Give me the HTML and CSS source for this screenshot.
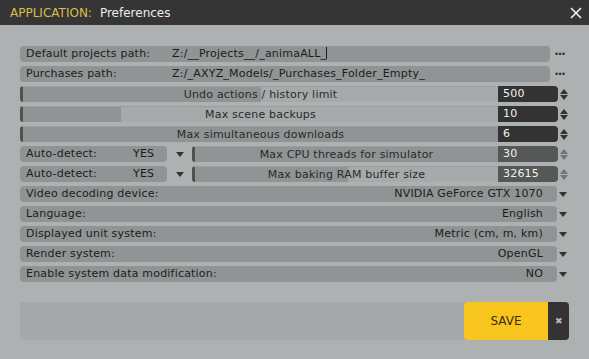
FILE: index.html
```html
<!DOCTYPE html>
<html lang="en">
<head>
    <meta charset="UTF-8">
    <title>Preferences</title>
    <link rel="stylesheet" href="styles.css">
</head>
<body>
    <div class="titlebar">
        <span class="app">APPLICATION:</span>
        <span class="title">Preferences</span>
        <svg class="close" width="12" height="12" viewBox="0 0 12 12">
            <path d="M1 1 L11 11 M11 1 L1 11" stroke="#f0f0f0" stroke-width="1.6" fill="none"/>
        </svg>
    </div>

    <div class="content">
        <div class="row">
            <div class="field path">
                <span class="label">Default projects path:</span>
                <span class="value">Z:/__Projects__/_animaALL_<span class="caret"></span></span>
            </div>
            <div class="side dots">&middot;&middot;&middot;</div>
        </div>
        <div class="row">
            <div class="field path">
                <span class="label">Purchases path:</span>
                <span class="value">Z:/_AXYZ_Models/_Purchases_Folder_Empty_</span>
            </div>
            <div class="side dots">&middot;&middot;&middot;</div>
        </div>

        <div class="row">
            <div class="slider">
                <div class="track"><div class="fill" style="width: 50%"></div><span>Undo actions / history limit</span></div>
                <div class="num">500</div>
            </div>
            <div class="side spin"><i class="up"></i><i class="down"></i></div>
        </div>
        <div class="row">
            <div class="slider">
                <div class="track"><div class="fill" style="width: 20.7%"></div><span>Max scene backups</span></div>
                <div class="num">10</div>
            </div>
            <div class="side spin"><i class="up"></i><i class="down"></i></div>
        </div>
        <div class="row">
            <div class="slider">
                <div class="track"><div class="fill" style="width: 100%"></div><span>Max simultaneous downloads</span></div>
                <div class="num">6</div>
            </div>
            <div class="side spin"><i class="up"></i><i class="down"></i></div>
        </div>

        <div class="row">
            <div class="field auto">
                <span class="label">Auto-detect:</span>
                <span class="yes">YES</span>
            </div>
            <div class="auto-arrow"><i class="down"></i></div>
            <div class="slider off">
                <div class="track"><div class="fill" style="width: 100%"></div><span>Max CPU threads for simulator</span></div>
                <div class="num">30</div>
            </div>
            <div class="side spin off"><i class="up"></i><i class="down"></i></div>
        </div>
        <div class="row">
            <div class="field auto">
                <span class="label">Auto-detect:</span>
                <span class="yes">YES</span>
            </div>
            <div class="auto-arrow"><i class="down"></i></div>
            <div class="slider off">
                <div class="track"><div class="fill" style="width: 50.6%"></div><span>Max baking RAM buffer size</span></div>
                <div class="num">32615</div>
            </div>
            <div class="side spin off"><i class="up"></i><i class="down"></i></div>
        </div>

        <div class="row">
            <div class="field select">
                <span class="label">Video decoding device:</span>
                <span class="choice">NVIDIA GeForce GTX 1070</span>
            </div>
            <div class="side drop"><i class="down"></i></div>
        </div>
        <div class="row">
            <div class="field select">
                <span class="label">Language:</span>
                <span class="choice">English</span>
            </div>
            <div class="side drop"><i class="down"></i></div>
        </div>
        <div class="row">
            <div class="field select">
                <span class="label">Displayed unit system:</span>
                <span class="choice">Metric (cm, m, km)</span>
            </div>
            <div class="side drop"><i class="down"></i></div>
        </div>
        <div class="row">
            <div class="field select">
                <span class="label">Render system:</span>
                <span class="choice">OpenGL</span>
            </div>
            <div class="side drop"><i class="down"></i></div>
        </div>
        <div class="row">
            <div class="field select">
                <span class="label">Enable system data modification:</span>
                <span class="choice">NO</span>
            </div>
            <div class="side drop"><i class="down"></i></div>
        </div>

        <div class="footer">
            <button class="save">SAVE</button>
            <button class="cancel">&#x2716;</button>
        </div>
    </div>
</body>
</html>
```

FILE: styles.css
```css
body {
    margin: 0;
    background-color: #adb1b1;
    font-family: "DejaVu Sans", Verdana, sans-serif;
    font-size: 11px;
    letter-spacing: 0.2px;
    color: #1c1c1c;
}

.titlebar {
    display: flex;
    align-items: center;
    height: 25px;
    padding: 0 7px 0 10px;
    background-color: #353535;
    font-size: 12px;
    letter-spacing: 0;
}

.titlebar .app {
    color: #d9bd48;
    margin-right: 8px;
}

.titlebar .title {
    color: #ececec;
    flex: 1;
}

.content {
    padding: 21px 20px 0 20px;
}

.row {
    display: flex;
    height: 16px;
    margin-bottom: 4px;
}

.field {
    flex: 1;
    display: flex;
    align-items: center;
    background-color: #909494;
    border-radius: 4px;
    padding: 0 6px;
    line-height: 16px;
    white-space: nowrap;
}

.path .label {
    width: 146px;
}

.caret {
    display: inline-block;
    width: 1px;
    height: 12px;
    background-color: #1c1c1c;
    vertical-align: -2px;
}

.side {
    display: flex;
    align-items: center;
    justify-content: center;
}

.dots {
    width: 19px;
    font-weight: bold;
    letter-spacing: -1px;
    color: #333333;
    font-size: 12px;
}

.drop {
    width: 12px;
}

.spin {
    width: 11px;
    flex-direction: column;
    gap: 1px;
}

.up, .down {
    display: block;
    width: 0;
    height: 0;
    border-left: 4px solid transparent;
    border-right: 4px solid transparent;
}

.up {
    border-bottom: 5px solid #333333;
}

.down {
    border-top: 5px solid #333333;
}

.off .up {
    border-bottom-color: #727575;
}

.off .down {
    border-top-color: #727575;
}

.slider {
    flex: 1;
    display: flex;
}

.track {
    flex: 1;
    position: relative;
    background-color: #a6aaaa;
    border-left: 3px solid #505252;
    border-radius: 3px 0 0 3px;
    border-top: 1px solid #9a9e9e;
    overflow: hidden;
}

.fill {
    height: 100%;
    background-color: #909494;
}

.track span {
    position: absolute;
    left: 0;
    right: 0;
    top: 0;
    line-height: 15px;
    text-align: center;
    color: #2a2a2a;
}

.num {
    width: 55px;
    padding-left: 5px;
    background-color: #333333;
    color: #f2f2f2;
    line-height: 16px;
    border-radius: 0 4px 4px 0;
}

.off .num {
    background-color: #565757;
}

.auto {
    flex: 0 0 135px;
}

.auto .label {
    width: 107px;
}

.auto-arrow {
    width: 25px;
    display: flex;
    align-items: center;
    justify-content: center;
}

.select {
    padding-right: 14px;
}

.select .label {
    flex: 1;
}

.footer {
    display: flex;
    justify-content: flex-end;
    margin-top: 20px;
    height: 38px;
    background-color: #a5a9a9;
    border-radius: 3px;
}

.save {
    width: 84px;
    border: none;
    background-color: #f7c51e;
    border-radius: 4px 0 0 4px;
    font-family: inherit;
    font-size: 12px;
    color: #3a2e10;
}

.cancel {
    width: 21px;
    border: none;
    background-color: #333333;
    border-radius: 0 4px 4px 0;
    color: #b8b8b8;
    font-size: 9px;
    padding: 0;
}
```
